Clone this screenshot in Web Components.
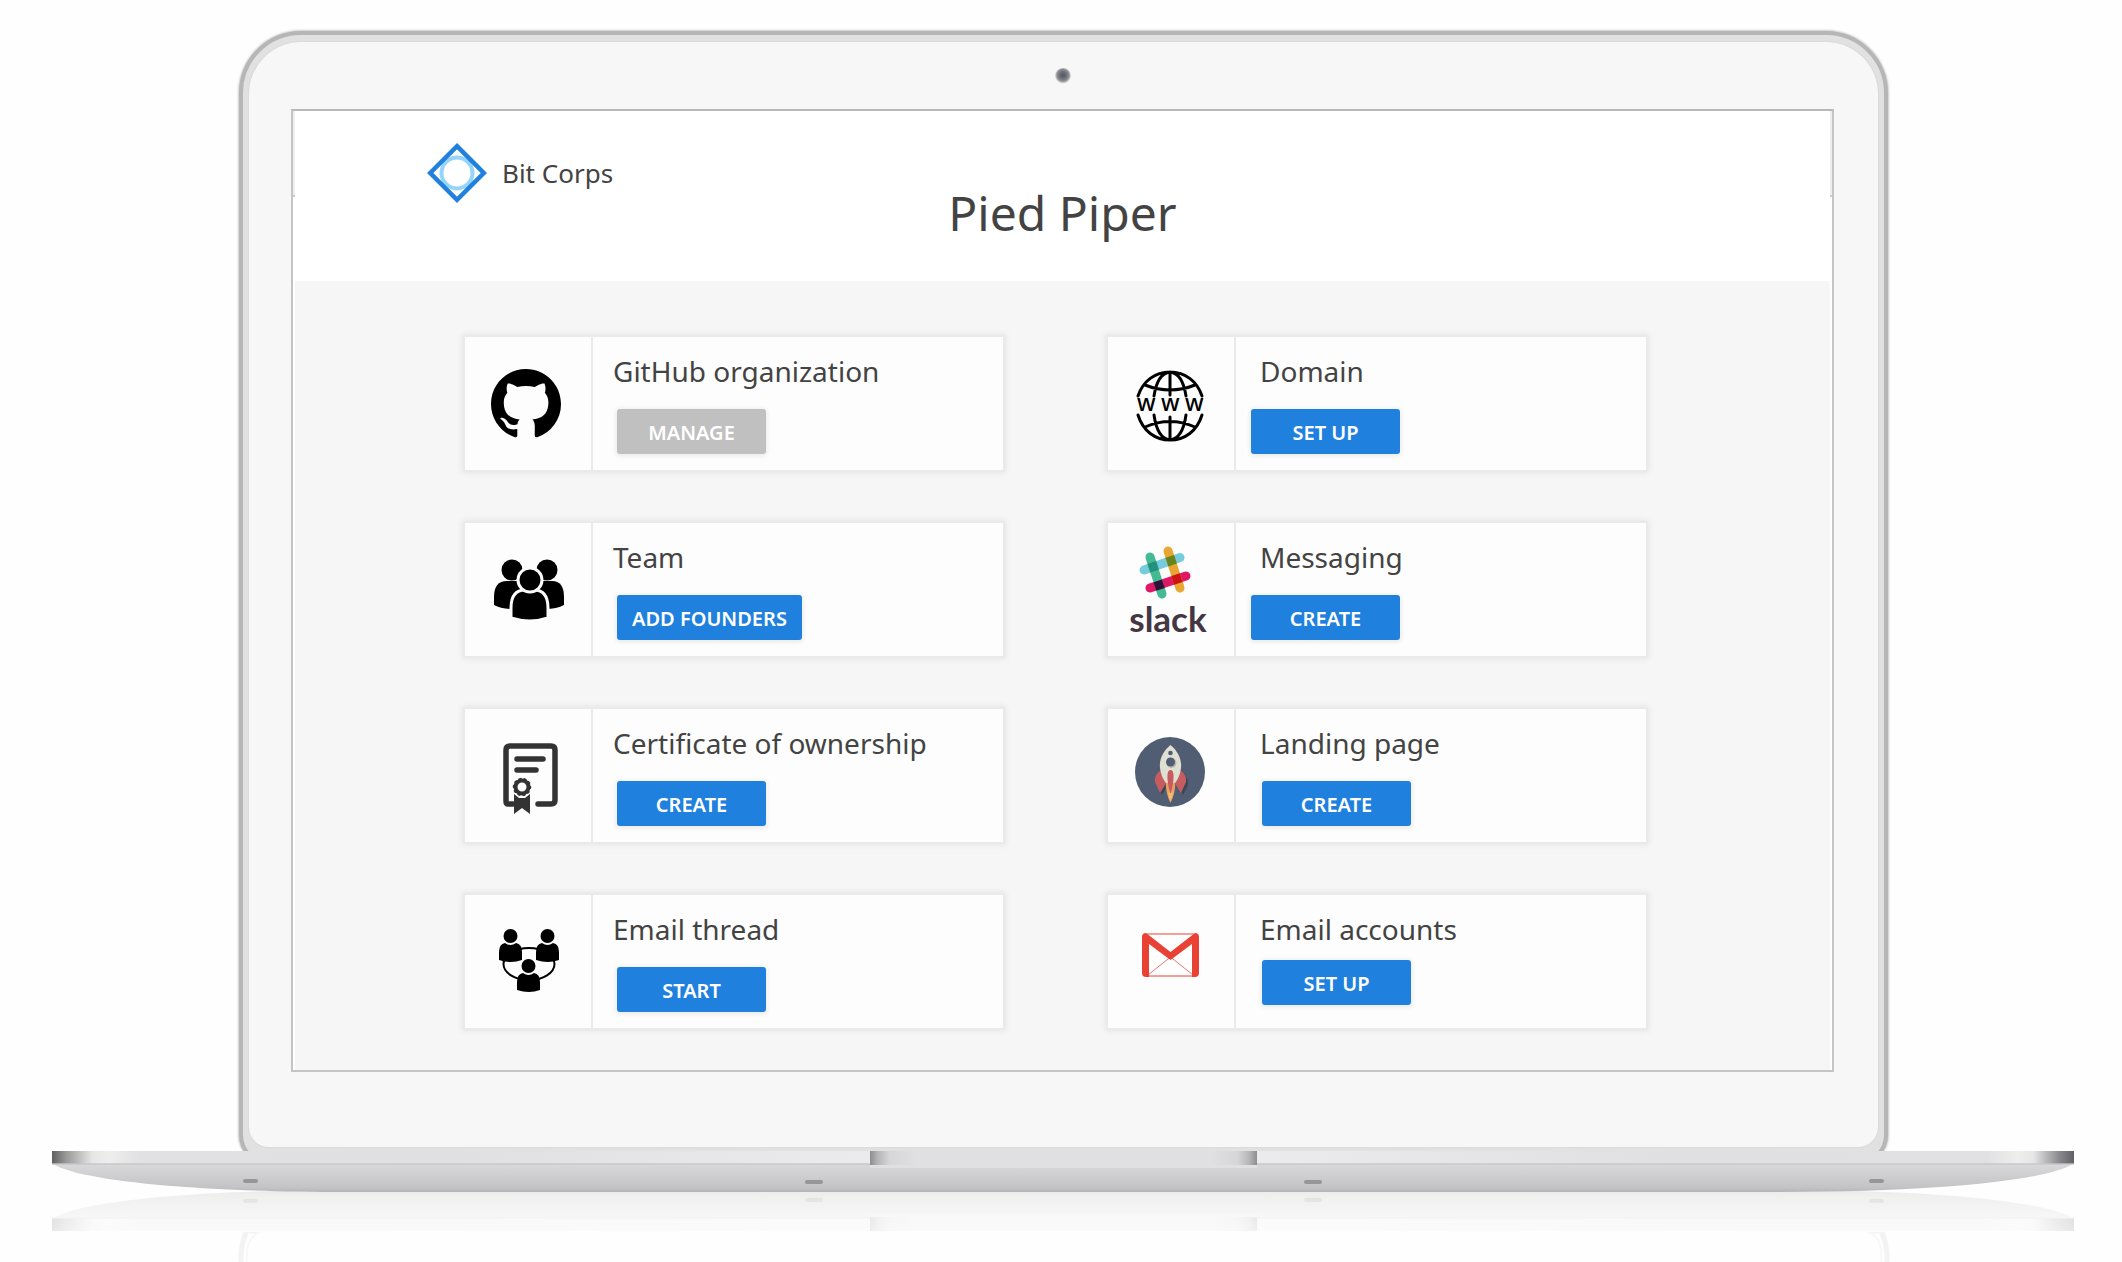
<!DOCTYPE html>
<html lang="en">
<head>
<meta charset="utf-8">
<title>Pied Piper – Bit Corps</title>
<style>
  body { margin: 0; background: #fefefe; color: #434343; font-family: "Noto Sans", "Open Sans", sans-serif; }
</style>
</head>
<body>
<laptop-frame>
  <app-header brand="Bit Corps">Pied Piper</app-header>
  <card-grid>
    <tool-card icon="github" action="Manage" tone="muted">GitHub organization</tool-card>
    <tool-card icon="globe" action="Set up" class="right">Domain</tool-card>
    <tool-card icon="team" action="Add founders">Team</tool-card>
    <tool-card icon="slack" action="Create" class="right">Messaging</tool-card>
    <tool-card icon="certificate" action="Create">Certificate of ownership</tool-card>
    <tool-card icon="rocket" action="Create" class="right aligned">Landing page</tool-card>
    <tool-card icon="thread" action="Start">Email thread</tool-card>
    <tool-card icon="gmail" action="Set up" class="right aligned tight">Email accounts</tool-card>
  </card-grid>
</laptop-frame>

<script>
const PERSON = `<path d="M34 65V57Q34 49 40 48Q45.500 52 51 48Q57 49 57 57V65Q46 69 34 65Z"/><circle cx="45.500" cy="41" r="7"/>`;

const ICONS = {
  github: `<svg x="26" y="32" width="70" height="70" viewBox="0 0 16 16"><path d="M8 0C3.58 0 0 3.58 0 8c0 3.54 2.29 6.53 5.47 7.59.4.07.55-.17.55-.38 0-.19-.01-.82-.01-1.49-2.01.37-2.53-.49-2.69-.94-.09-.23-.48-.94-.82-1.13-.28-.15-.68-.52-.01-.53.63-.01 1.08.58 1.23.82.72 1.21 1.87.87 2.33.66.07-.52.28-.87.51-1.07-1.78-.2-3.64-.89-3.64-3.95 0-.87.31-1.59.82-2.15-.08-.2-.36-1.02.08-2.12 0 0 .67-.21 2.2.82.64-.18 1.32-.27 2-.27s1.36.09 2 .27c1.53-1.04 2.2-.82 2.2-.82.44 1.1.16 1.92.08 2.12.51.56.82 1.27.82 2.15 0 3.07-1.87 3.75-3.65 3.95.29.25.54.73.54 1.48 0 1.07-.01 1.93-.01 2.2 0 .21.15.46.55.38A8.01 8.01 0 0 0 16 8c0-4.42-3.58-8-8-8z"/></svg>`,
  globe: `<g fill="none" stroke="#000" stroke-width="3" stroke-linecap="round">
      <path d="M30 59C35 44 47 35 62 35S89 44 94 59M62 35V58M62 35C53 36 48 46 46 59M62 35C71 36 76 46 78 59M37 48Q62 58 87 48"/>
      <path d="M30 78C35 94 47 103 62 103S89 94 94 78M62 80V103M62 103C53 102 48 92 46 78M62 103C71 102 76 92 78 78M37 90Q62 79 87 90"/></g>
      <text x="29 53 77" y="74" font-size="23" font-weight="500">www</text>`,
  team: `<circle cx="47" cy="47" r="10.5"/><circle cx="82" cy="47" r="10.5"/>
      <path d="M29 82V74Q29 58 42 58H87Q99 58 99 74V82Q92 86 80 86H48Q36 86 29 82Z"/>
      <g stroke="#fdfdfd" stroke-width="3"><path d="M46 95V85Q46 67 60 67H69Q83 67 83 85V95Q65 101 46 95Z"/><circle cx="65" cy="57" r="12"/></g>`,
  slack: `<g fill="none" stroke-width="9" stroke-linecap="round">
      <path d="M36 47 72 34.500" stroke="#74ccdc"/><path d="M42 65 78 53" stroke="#e01765"/>
      <path d="M42 34 54 71" stroke="#44ba91"/><path d="M60 28 72 65" stroke="#e8a632"/>
      <g stroke-linecap="butt"><path d="M43.800 39.500 46.600 48.200" stroke="#23917b"/><path d="M61.800 33.400 64.600 42" stroke="#66851f"/><path d="M49.700 57.800 52.500 66.400" stroke="#35113a"/><path d="M67.600 51.700 70.400 60.300" stroke="#cc1414"/></g></g>
      <text x="60" y="109" text-anchor="middle" font-family="Lato, sans-serif" font-weight="700" font-size="35" fill="#443642">slack</text>`,
  certificate: `<g fill="none" stroke="#333" stroke-linecap="round" stroke-linejoin="round">
      <path d="M48 95H43Q41 95 41 92V41Q41 37 45 37H86Q90 37 90 41V91Q90 95 86 95H73" stroke-width="5.5"/>
      <path d="M52 50H78M52 61H71" stroke-width="5.5"/>
      <circle cx="57" cy="78" r="6.5" stroke-width="4"/><circle cx="57" cy="78" r="8" stroke-width="2.5" stroke-dasharray="1 4"/></g>
      <path d="M49 85 54 89H60L65 85V105L57 99 49 105Z" fill="#333"/>`,
  rocket: `<circle cx="62" cy="63" r="35" fill="#505d73"/>
      <path d="M55 59Q46 66 47 74L52 84 59 72ZM70 59Q79 66 78 74L73 84 66 72Z" fill="#3c4655" transform="translate(2 2)"/>
      <path d="M58 72H67Q68 83 62.500 94 57 83 58 72Z" fill="#e8a160"/><path d="M62 78Q67 84 62 92Q59 84 62 78Z" fill="#f3bd71"/>
      <path d="M53 61Q46 66 47 73L52 84 59 73ZM72 61Q79 66 78 73L73 84 66 73Z" fill="#c65c5f"/>
      <path d="M62.500 36C55 42 51 51 52 59Q53 68 58 74H67Q72 68 73 59C74 51 70 42 62.500 36Z" fill="#dfdfd2"/>
      <path d="M62.500 61C59 61 58 68 62 84H63C67 68 66 61 62.500 61Z" fill="#c65c5f"/>
      <circle cx="63.500" cy="54" r="5" fill="#b8b8b2"/><circle cx="62.500" cy="53" r="4.500" fill="#505d73"/><circle cx="62.500" cy="44" r="2.300" fill="#505d73"/>`,
  thread: `<ellipse cx="64" cy="69" rx="25.500" ry="16" fill="none" stroke="#000" stroke-width="2"/>
      ${PERSON}<g transform="translate(37 0)">${PERSON}</g><g transform="translate(18 30)">${PERSON}</g>`,
  gmail: `<rect x="35" y="39" width="55" height="42" rx="4" fill="#fff" stroke="#ea4335"/>
      <path d="M40 80 62.500 62 85 80" fill="none" stroke="#ee7368"/>
      <path d="M34 42Q34 38 38 38L62.500 57 87 38Q91 38 91 42V78Q91 82 87 82H84V49L62.500 65 41 49V82H38Q34 82 34 78Z" fill="#e94235"/>`
};

class LaptopFrame extends HTMLElement {
  constructor() {
    super();
    const base = `
      <path d="M53 13C75 27 170 41 350 41H1776C1956 41 2051 27 2073 13Z" fill="url(#under)"/>
      <rect x="52" width="2022" height="13" fill="url(#strip)"/>
      <rect x="52" y="12" width="2022" height="2" fill="#c6c6c8" opacity=".7"/>
      <rect x="870" width="387" height="17" fill="#e0e0e2"/>
      <rect x="870" width="387" height="14" fill="url(#notch)"/>
      <g fill="#969698"><rect x="243" y="28" width="15" height="4" rx="2"/><rect x="805" y="29" width="18" height="4" rx="2"/><rect x="1304" y="29" width="18" height="4" rx="2"/><rect x="1869" y="28" width="15" height="4" rx="2"/></g>`;
    this.attachShadow({ mode: "open" }).innerHTML = `
    <style>
      :host { display: block; overflow: hidden; }
      .lid { margin: 31px 234px -14px 239px; border: 4px solid #b6b6b6; border-radius: 62px 62px 30px 30px; background: #e1e1e1; padding: 7px 6px 14px; box-shadow: 0 0 2px 1px #ccc; }
      .pane { background: #f7f7f7; border-radius: 52px 52px 20px 20px; padding: 0 44px 75px 42px; box-shadow: 0 0 2px #ccc; }
      .bezel { height: 67px; display: flex; align-items: center; justify-content: center; }
      .camera { width: 16px; height: 16px; border-radius: 50%; background: radial-gradient(circle at 50% 45%, #5c606b 15%, #88898d 48%, #e2e2e2 68%, #f7f7f7 72%); }
      .screen { border: 2px solid #c4c4c4; border-top-color: #b8b8b8; padding: 0 2px; background:
        linear-gradient(#ccc, #ccc) 0 84px / 3px 2px no-repeat, linear-gradient(#ccc, #ccc) 100% 84px / 3px 2px no-repeat,
        linear-gradient(#eee, #eee) 0 0 / 2px 86px no-repeat, linear-gradient(#eee, #eee) 100% 0 / 2px 86px no-repeat, #fff; }
      .base { display: block; position: relative; width: 100%; }
    </style>
    <div class="lid"><div class="pane">
      <div class="bezel"><div class="camera"></div></div>
      <div class="screen"><slot></slot></div>
    </div></div>
    <svg class="base" viewBox="0 0 2122 111" aria-hidden="true">
      <defs>
        <linearGradient id="under" x2="0" y2="1"><stop stop-color="#d9d9db"/><stop offset=".85" stop-color="#c3c3c5"/><stop offset="1" stop-color="#b4b4b4"/></linearGradient>
        <linearGradient id="strip"><stop stop-color="#606062"/><stop offset=".007" stop-color="#999"/><stop offset=".02" stop-color="#e6e6e6"/><stop offset=".028" stop-color="#eee"/><stop offset=".043" stop-color="#e1e1e3"/><stop offset=".2" stop-color="#e0e0e2"/><stop offset=".4" stop-color="#ebebed"/><stop offset=".6" stop-color="#ebebed"/><stop offset=".8" stop-color="#e0e0e2"/><stop offset=".957" stop-color="#e1e1e3"/><stop offset=".972" stop-color="#eee"/><stop offset=".98" stop-color="#e6e6e6"/><stop offset=".993" stop-color="#88888c"/><stop offset="1" stop-color="#606066"/></linearGradient>
        <linearGradient id="notch"><stop stop-color="#8d8d8f"/><stop offset=".02" stop-color="#b5b5b7"/><stop offset=".05" stop-color="#d6d6d8"/><stop offset=".12" stop-color="#e0e0e2"/><stop offset=".88" stop-color="#e0e0e2"/><stop offset=".95" stop-color="#d6d6d8"/><stop offset=".98" stop-color="#b5b5b7"/><stop offset="1" stop-color="#8d8d8f"/></linearGradient>
        <linearGradient id="fade" x2="0" y2="1"><stop stop-color="#fefefe" stop-opacity=".72"/><stop offset="1" stop-color="#fefefe" stop-opacity=".86"/></linearGradient>
      </defs>
      <rect width="2122" height="111" fill="#fefefe"/>
      <path d="M241 111V104Q242 89 247 80H1881Q1886 89 1887 104V111" fill="none" stroke="#f3f3f3" stroke-width="5"/>
      <path d="M247 111V100Q250 80 268 80H1862Q1880 82 1881 100V111" fill="#fefefe" stroke="#f8f8f8" stroke-width="2"/>
      <g transform="translate(0 80) scale(1 -1)">${base}</g>
      <rect y="39" width="2122" height="42" fill="url(#fade)"/>
      ${base}
    </svg>`;
  }
}

class AppHeader extends HTMLElement {
  constructor() {
    super();
    this.attachShadow({ mode: "open" }).innerHTML = `
    <style>
      :host { display: block; background: #fff; }
      header { display: grid; grid-template-columns: 1fr auto 1fr; align-items: start; height: 170px; box-sizing: border-box; padding-top: 32px; }
      a { display: flex; align-items: center; gap: 15px; padding-left: 132px; color: inherit; text-decoration: none; font-size: 26px; line-height: 60px; }
      h1 { margin: 36px 0 0; font-size: 48px; line-height: 68px; font-weight: 400; }
    </style>
    <header>
      <a href="#"><svg width="60" height="60" viewBox="0 0 60 60" aria-hidden="true"><circle cx="30" cy="30" r="15.500" fill="none" stroke="#95d4fb" stroke-width="4"/><path d="M30 3.200 56.800 30 30 56.800 3.200 30Z" fill="none" stroke="#1f80de" stroke-width="4.500"/></svg><span></span></a>
      <h1><slot></slot></h1>
    </header>`;
    this.shadowRoot.querySelector("span").textContent = this.getAttribute("brand");
  }
}

class CardGrid extends HTMLElement {
  constructor() {
    super();
    this.attachShadow({ mode: "open" }).innerHTML = `
    <style>
      :host { display: grid; grid-template-columns: 1fr 1fr; gap: 49px 101px; padding: 54px 182px 40px 168px; background: #f6f6f6; }
    </style><slot></slot>`;
  }
}

class ToolCard extends HTMLElement {
  constructor() {
    super();
    this.attachShadow({ mode: "open" }).innerHTML = `
    <style>
      :host { display: flex; background: #fdfdfd; border: 2px solid #eaeaea; box-shadow: 0 0 5px 1px #e6e6e6; --title: 20px; --button: 24px; --gap: 19px; }
      :host(.right) { --title: 24px; --button: 15px; }
      :host(.aligned) { --button: 26px; }
      :host(.tight) { --gap: 12px; }
      svg { display: block; }
      .icon { flex: none; border-right: 2px solid #eaeaea; }
      .body { flex: 1; padding-top: 16px; }
      h2 { margin: 0 0 var(--gap) var(--title); font-size: 28px; line-height: 37px; font-weight: 400; }
      button { display: block; margin-left: var(--button); min-width: 149px; height: 45px; padding: 3px 15px 0; border: 0; border-radius: 3px; background: #1f80de; color: #fff; font: 600 20px/24px "Noto Sans", sans-serif; text-transform: uppercase; box-shadow: 0 1px 5px 1px #e9e9e9; }
      :host([tone="muted"]) button { background: #c0c0c0; }
    </style>
    <div class="icon"><svg width="126" height="133" viewBox="0 0 126 133" aria-hidden="true"></svg></div>
    <div class="body"><h2><slot></slot></h2><button type="button"></button></div>`;
    this.shadowRoot.querySelector("svg").innerHTML = ICONS[this.getAttribute("icon")];
    this.shadowRoot.querySelector("button").textContent = this.getAttribute("action");
  }
}

customElements.define("laptop-frame", LaptopFrame);
customElements.define("app-header", AppHeader);
customElements.define("card-grid", CardGrid);
customElements.define("tool-card", ToolCard);
</script>
</body>
</html>
